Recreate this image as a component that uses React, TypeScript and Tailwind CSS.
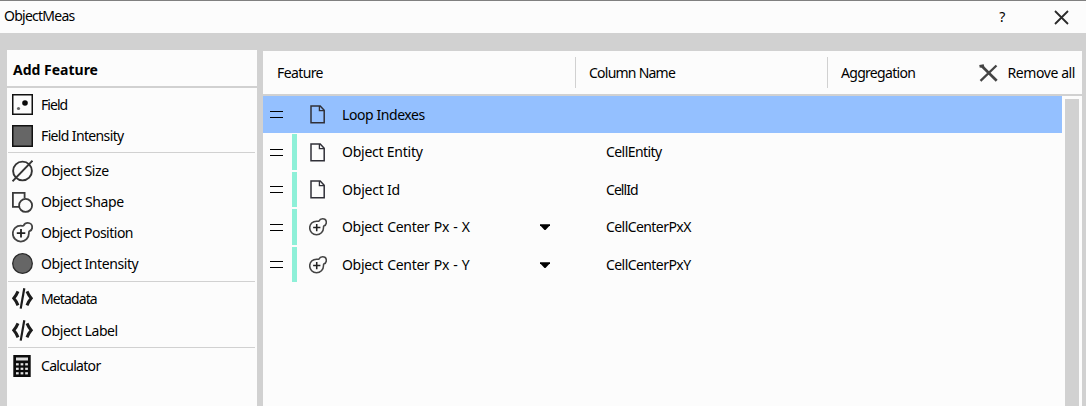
import type { ReactNode } from "react";

const FieldIcon = () => (
  <svg width="21" height="21" viewBox="0 0 21 21">
    <rect x="0.75" y="0.75" width="19.5" height="19.5" fill="#fcfcfc" stroke="#111" strokeWidth="1.5" />
    <circle cx="13" cy="9" r="2.8" fill="#0a0a0a" />
    <circle cx="6.5" cy="14.5" r="1.6" fill="#666" />
  </svg>
);

const SquareIcon = () => (
  <svg width="21" height="22" viewBox="0 0 21 22">
    <rect x="0.75" y="0.75" width="19.5" height="20.5" fill="#666" stroke="#111" strokeWidth="1.5" />
  </svg>
);

const SizeIcon = () => (
  <svg width="21" height="22" viewBox="0 0 21 22" fill="none" stroke="#333" strokeWidth="1.9">
    <circle cx="10.5" cy="11" r="9.4" />
    <path d="M0.5 21.3L20.5 0.7" />
  </svg>
);

const ShapeIcon = () => (
  <svg width="21" height="21" viewBox="0 0 21 21" fill="none" stroke="#3a3a3a" strokeWidth="1.8">
    <path d="M7 14.8H0.9V0.9H12.6V6.3" />
    <circle cx="13.6" cy="13.4" r="6.5" />
  </svg>
);

const PositionIcon = ({ size }: { size: number }) => (
  <svg width={size} height={size} viewBox="0 0 21 21" fill="none" stroke="#444" strokeWidth="1.8">
    <path d="M11.6 3.6C12.4 1.8 14 0.9 15.8 0.9C18.4 0.9 20.2 2.8 20.2 5.2C20.2 7.5 18.9 8.8 17.2 9.4C16.8 9.8 16.9 10.4 16.9 11.3C16.9 16 13.3 19.6 8.8 19.6C4.3 19.6 0.8 16 0.8 11.5C0.8 7 4.3 3.7 8.8 3.7C9.9 3.7 11.2 4.2 11.6 3.6Z" />
    <path d="M9 7v8.5M4.8 11.2h8.5" stroke="#222" strokeWidth="1.8" />
  </svg>
);

const CircleIcon = () => (
  <svg width="21" height="21" viewBox="0 0 21 21">
    <circle cx="10.5" cy="10.5" r="9.8" fill="#666" stroke="#2a2a2a" strokeWidth="1.3" />
  </svg>
);

const CodeIcon = () => (
  <svg width="21" height="21" viewBox="0 0 21 21" fill="none" stroke="#1c1c1c">
    <path d="M6 3.4C4.7 6.5 3.4 8.5 1.8 10.3C3.4 12.1 4.7 14.2 6 17.3M15 3.4C16.3 6.5 17.6 8.5 19.2 10.3C17.6 12.1 16.3 14.2 15 17.3" strokeWidth="3" />
    <path d="M12.3 0.3L8.7 20.6" strokeWidth="2.2" />
  </svg>
);

const CalculatorIcon = () => (
  <svg width="21" height="22" viewBox="0 0 21 22">
    <rect x="1.3" y="0" width="17.4" height="22" fill="#0c0c0c" />
    <rect x="4" y="2.5" width="12" height="3" fill="#ddd" />
    <g fill="#e4e4e4">
      {[8.2, 12.7, 17.2].map((y) =>
        [4, 8.6, 13.2].map((x) => <rect key={`${x}-${y}`} x={x} y={y} width="2.7" height="2.2" />),
      )}
    </g>
  </svg>
);

const PageIcon = () => (
  <svg width="16" height="19" viewBox="0 0 16 19" fill="none" stroke="#303038" strokeWidth="1.5">
    <path d="M1 1H10.2L14.2 5.3V17.7H1Z" />
    <path d="M9.4 1V5.6H14.2" strokeWidth="1.3" />
  </svg>
);

const GripIcon = () => (
  <svg width="13" height="7" viewBox="0 0 13 7" shapeRendering="crispEdges">
    <path d="M0 0.5H13M0 6.5H13" stroke="#000" />
  </svg>
);

type Item = { label: string; icon: ReactNode; box: string };

const groups: { className: string; items: Item[] }[] = [
  {
    className: "h-[64px] pt-[1px]",
    items: [
      { label: "Field", icon: <FieldIcon />, box: "h-[31px] tracking-[-0.95px]" },
      { label: "Field Intensity", icon: <SquareIcon />, box: "h-[32px] tracking-[-0.64px]" },
    ],
  },
  {
    className: "h-[129px] border-t border-[#d1d1d1] pt-[1px]",
    items: [
      { label: "Object Size", icon: <SizeIcon />, box: "h-[33px] tracking-[-0.42px]" },
      { label: "Object Shape", icon: <ShapeIcon />, box: "h-[30px] tracking-[-0.36px]" },
      { label: "Object Position", icon: <PositionIcon size={21} />, box: "h-[31px] tracking-[-0.5px]" },
      { label: "Object Intensity", icon: <CircleIcon />, box: "h-[31px] tracking-[-0.42px]" },
    ],
  },
  {
    className: "h-[66px] border-t border-[#d1d1d1] pt-[1px]",
    items: [
      { label: "Metadata", icon: <CodeIcon />, box: "h-[31px] tracking-[-0.88px]" },
      { label: "Object Label", icon: <CodeIcon />, box: "h-[33px] tracking-[-0.42px]" },
    ],
  },
  {
    className: "border-t border-[#d1d1d1] pt-[1px]",
    items: [{ label: "Calculator", icon: <CalculatorIcon />, box: "h-[34px] tracking-[-0.7px]" }],
  },
];

const rows = [
  { feature: "Loop Indexes", column: "", kind: "page", box: "h-[37px] bg-[#94c0ff]", bar: "", text: "", name: "" },
  { feature: "Object Entity", column: "CellEntity", kind: "page", box: "h-[38px]", bar: "bg-[#8ef0d8]", text: "tracking-[-0.24px]", name: "tracking-[-0.57px]" },
  { feature: "Object Id", column: "CellId", kind: "page", box: "h-[37px]", bar: "bg-[#8ef0d8]", text: "tracking-[-0.2px]", name: "tracking-[-0.95px]" },
  { feature: "Object Center Px - X", column: "CellCenterPxX", kind: "position", box: "h-[38px]", bar: "bg-[#8ef0d8]", text: "tracking-[-0.32px] [word-spacing:1px]", name: "tracking-[-0.57px]" },
  { feature: "Object Center Px - Y", column: "CellCenterPxY", kind: "position", box: "h-[37px]", bar: "bg-[#8ef0d8]", text: "tracking-[-0.32px] [word-spacing:1px]", name: "tracking-[-0.57px]" },
];

export default function App() {
  return (
    <div className="flex h-[406px] w-[1086px] flex-col overflow-hidden bg-[#d1d1d1] font-['Noto_Sans',sans-serif] text-[14px] leading-5 tracking-[-0.42px] whitespace-nowrap text-black">
      <header className="flex h-[33px] shrink-0 items-center border-t border-[#808080] bg-[#fcfcfc] pr-[17px] pl-1">
        <h1 className="-mt-[3px] flex-1 tracking-[-0.75px]">ObjectMeas</h1>
        <button className="mr-[49px] text-[14px]">?</button>
        <svg width="15" height="15" viewBox="0 0 15 15" stroke="#2a2a2a" strokeWidth="1.8">
          <path d="M1 1L14 14M14 1L1 14" />
        </svg>
      </header>

      <main className="flex min-h-0 flex-1 gap-1.5 pr-1 pl-[7px]">
        <aside className="mt-[17px] w-[250px] bg-[#fcfcfc]">
          <h2 className="flex h-[38px] items-center border-b-2 border-[#d1d1d1] pt-[4px] pl-[6px] font-bold tracking-[0px]">Add Feature</h2>
          <div className="pr-[2px] pl-px">
            {groups.map((group, i) => (
              <div key={i} className={group.className}>
                {group.items.map((item) => (
                  <div key={item.label} className={`flex items-center pl-1 ${item.box}`}>
                    <span className="flex w-[29px]">{item.icon}</span>
                    <span>{item.label}</span>
                  </div>
                ))}
              </div>
            ))}
          </div>
        </aside>

        <section className="mt-[18px] flex w-[819px] flex-col bg-[#fcfcfc]">
          <div className="flex h-[45px] shrink-0 items-center border-b-2 border-[#d1d1d1]">
            <span className="w-[312px] pl-[14px] tracking-[-0.6px]">Feature</span>
            <span className="flex h-[31px] w-[252px] items-center border-l border-[#d1d1d1] pl-[13px] tracking-[-0.76px]">Column Name</span>
            <span className="flex h-[31px] flex-1 items-center border-l border-[#d1d1d1] pl-[13px] tracking-[-0.7px]">Aggregation</span>
            <button className="flex items-center gap-[10px] pr-[7px]">
              <svg width="19" height="18" viewBox="0 0 19 18" fill="none" stroke="#444">
                <path d="M2.5 1.8L17.7 16.8" strokeWidth="2.7" />
                <path d="M17.5 1.5L1.5 16.8" strokeWidth="2.3" />
                <path d="M0.5 2.4L5 1.6" strokeWidth="2.6" />
              </svg>
              <span>Remove all</span>
            </button>
          </div>
          <div className="flex min-h-0 flex-1">
            <div className="w-[799px]">
              {rows.map((row) => (
                <div key={row.feature} className={`flex items-center pl-[7px] ${row.box}`}>
                  <span className="w-[22px]"><GripIcon /></span>
                  <span className={`w-[5px] self-stretch border-y border-transparent bg-clip-padding ${row.bar}`} />
                  <span className="flex w-[45px] items-center pl-[12px]">
                    {row.kind === "page" ? <span className="pl-[1px]"><PageIcon /></span> : <PositionIcon size={18} />}
                  </span>
                  <span className={`w-[198px] ${row.text}`}>{row.feature}</span>
                  <span className="w-[66px]">
                    {row.kind === "position" && (
                      <svg width="10" height="6" viewBox="0 0 10 6"><path d="M0 0.3H10V1.2L5.5 6H4.5L0 1.2Z" /></svg>
                    )}
                  </span>
                  <span className={row.name}>{row.column}</span>
                </div>
              ))}
            </div>
            <div className="mt-[3px] ml-[3px] w-[14px] bg-[#d1d1d1]" />
          </div>
        </section>
      </main>
    </div>
  );
}
